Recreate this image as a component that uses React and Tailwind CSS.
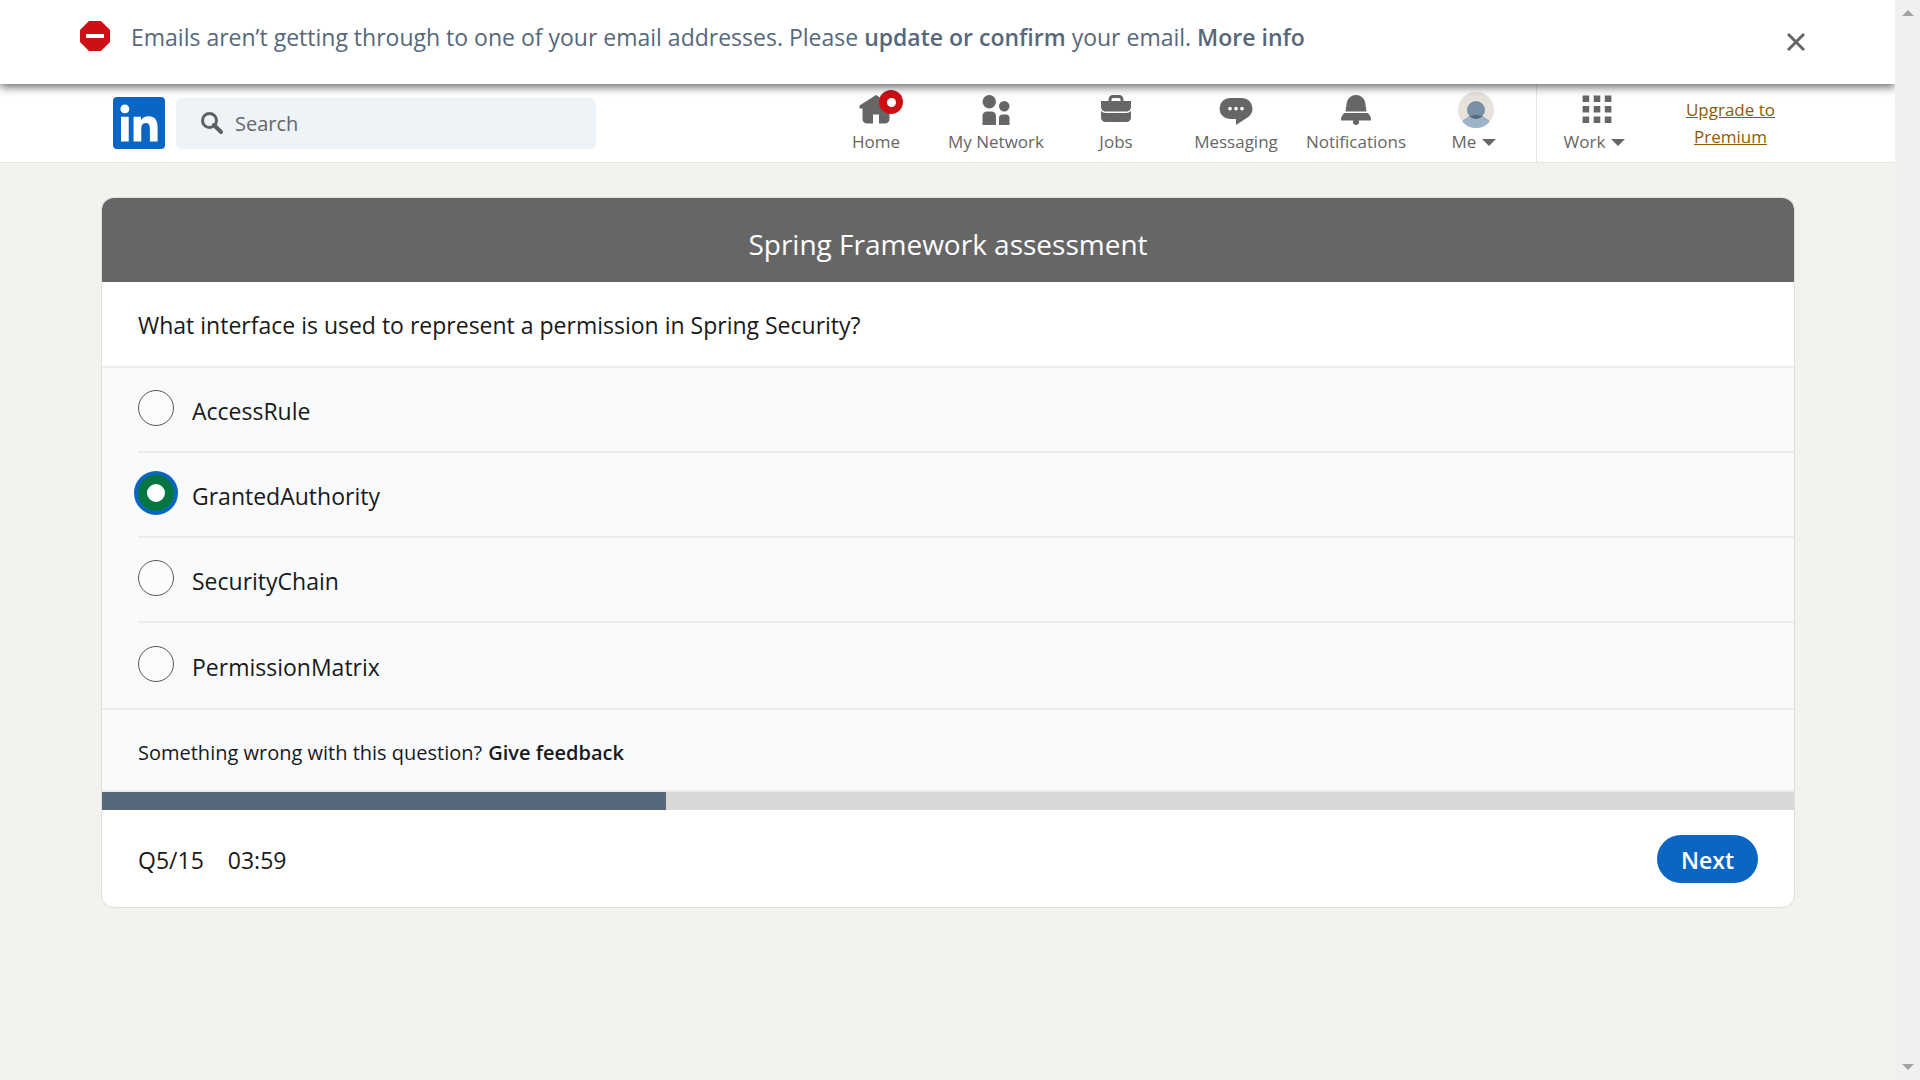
import { useState } from "react";
import { FaLinkedin } from "react-icons/fa";

const NavIcon = ({ d }) => (
  <svg viewBox="0 0 24 24" className="size-9" fill="currentColor" aria-hidden="true">
    <path d={d} />
  </svg>
);

const navItems = [
  {
    label: "Home",
    badge: true,
    d: "M23 9v2h-2v7a3 3 0 01-3 3h-4v-6h-4v6H6a3 3 0 01-3-3v-7H1V9l11-7 5 3.18V2h3v5.09z",
  },
  {
    label: "My Network",
    d: "M12 16v6H3v-6a3 3 0 013-3h3a3 3 0 013 3zm5.5-3A3.5 3.5 0 1014 9.5a3.5 3.5 0 003.5 3.5zm1 2h-2a2.5 2.5 0 00-2.5 2.5V22h7v-4.5a2.5 2.5 0 00-2.5-2.5zM7.5 2A4.5 4.5 0 1012 6.5 4.49 4.49 0 007.5 2z",
  },
  {
    label: "Jobs",
    d: "M17 6V5a3 3 0 00-3-3h-4a3 3 0 00-3 3v1H2v4a3 3 0 003 3h14a3 3 0 003-3V6zM9 5a1 1 0 011-1h4a1 1 0 011 1v1H9zm10 9a4 4 0 003-1.38V17a3 3 0 01-3 3H5a3 3 0 01-3-3v-4.38A4 4 0 005 14z",
  },
  {
    label: "Messaging",
    d: "M16 4H8a7 7 0 000 14h4v4l8.16-5.39A6.78 6.78 0 0023 11a7 7 0 00-7-7zm-8 8.25A1.25 1.25 0 119.25 11 1.25 1.25 0 018 12.25zm4 0A1.25 1.25 0 1113.25 11 1.25 1.25 0 0112 12.25zm4 0A1.25 1.25 0 1117.25 11 1.25 1.25 0 0116 12.25z",
  },
  {
    label: "Notifications",
    d: "M22 19h-8.28a2 2 0 11-3.44 0H2v-1a4.52 4.52 0 011.17-2.83l1-1.17h15.7l1 1.17A4.42 4.42 0 0122 18zM18.21 7.44A6.27 6.27 0 0012 2a6.27 6.27 0 00-6.21 5.44L5 13h14z",
  },
];

const answers = ["AccessRule", "GrantedAuthority", "SecurityChain", "PermissionMatrix"];

const Caret = () => (
  <svg viewBox="0 0 14 7" className="h-[7px] w-3.5 shrink-0" fill="currentColor" aria-hidden="true">
    <path d="M0 0h14L7 7z" />
  </svg>
);

function Banner() {
  return (
    <div className="relative z-10 flex h-[84px] items-center bg-white pl-20 pr-[83px] shadow-[0_3px_9px_rgba(0,0,0,0.6)]">
      <svg viewBox="0 0 30 30" className="mb-3 size-[30px] shrink-0" aria-hidden="true">
        <path d="M9 0h12l9 9v12l-9 9H9l-9-9V9z" fill="#cc1016" />
        <path d="M6 13h18v4H6z" fill="#fff" />
      </svg>
      <p className="mb-2.5 ml-[21px] flex-1 text-[23px] leading-9 text-[#56687a]">
        Emails aren’t getting through to one of your email addresses. Please{" "}
        <a href="#confirm" className="font-semibold">update or confirm</a> your email.{" "}
        <a href="#info" className="font-semibold">More info</a>
      </p>
      <button type="button" aria-label="Dismiss" className="flex size-8 items-center justify-center text-[#666]">
        <svg viewBox="0 0 18 18" className="size-[18px]" stroke="currentColor" strokeWidth="3" aria-hidden="true">
          <path d="M1 1l16 16M17 1L1 17" />
        </svg>
      </button>
    </div>
  );
}

function Header() {
  return (
    <header className="border-b border-[#e6e6e4] bg-white">
      <div className="flex h-[78px] items-center pl-[113px] pr-[90px]">
        <a href="#feed" aria-label="LinkedIn" className="flex h-[52px] w-[52px] items-center justify-center text-[#0a66c2]">
          <FaLinkedin className="h-[60px] w-[52px] shrink-0" />
        </a>
        <label className="ml-[11px] flex h-[51px] w-[420px] items-center gap-3 rounded-md bg-[#eef3f8] pl-[25px]">
          <svg viewBox="0 0 22 22" className="size-[22px] shrink-0" fill="none" stroke="#5e5e5e" aria-hidden="true">
            <circle cx="8.5" cy="8.5" r="7" strokeWidth="3" />
            <path d="M13 13l7 7" strokeWidth="4" strokeLinecap="round" />
          </svg>
          <input
            type="text"
            aria-label="Search"
            placeholder="Search"
            className="min-w-0 flex-1 bg-transparent pt-0.5 text-[20px] outline-none placeholder:text-[#666]"
          />
        </label>
        <nav className="ml-auto flex h-full text-[17px] leading-6 text-[#666]">
          {navItems.map((item) => (
            <a key={item.label} href={"#" + item.label} className="flex w-[120px] flex-col items-center gap-0.5 pt-2">
              <span className="relative">
                <NavIcon d={item.d} />
                {item.badge && (
                  <span className="absolute -right-[9px] -top-0.5 flex size-6 items-center justify-center rounded-full bg-[#cc1016]">
                    <span className="size-[9px] rounded-full bg-white" />
                  </span>
                )}
              </span>
              <span>{item.label}</span>
            </a>
          ))}
          <button type="button" className="flex w-[120px] flex-col items-center gap-0.5 pt-2">
            <svg viewBox="0 0 36 36" className="size-9" aria-hidden="true">
              <clipPath id="avatar"><circle cx="18" cy="18" r="18" /></clipPath>
              <clipPath id="head"><circle cx="18" cy="18" r="9" /></clipPath>
              <g clipPath="url(#avatar)">
                <path d="M0 0h36v36H0z" fill="#e7e2dc" />
                <circle cx="18" cy="18" r="9" fill="#788fa5" />
                <circle cx="18" cy="41" r="18" fill="#9db3c8" />
                <circle cx="18" cy="41" r="18" fill="#56687a" clipPath="url(#head)" />
              </g>
            </svg>
            <span className="flex items-center gap-1.5 pr-1">Me <Caret /></span>
          </button>
          <button type="button" className="flex w-[120px] flex-col items-center gap-0.5 border-l border-[#e6e6e6] pt-2">
            <NavIcon d="M2.4 2.3h4.4v4.4H2.4zM9.8 2.3h4.4v4.4H9.8zM17.2 2.3h4.4v4.4h-4.4zM2.4 9.3h4.4v4.4H2.4zM9.8 9.3h4.4v4.4H9.8zM17.2 9.3h4.4v4.4h-4.4zM2.4 16.3h4.4v4.4H2.4zM9.8 16.3h4.4v4.4H9.8zM17.2 16.3h4.4v4.4h-4.4z" />
            <span className="flex items-center gap-1.5 pr-1">Work <Caret /></span>
          </button>
          <a href="#premium" className="flex w-[149px] items-start justify-center px-6 pt-3 text-center leading-[27px] text-[#915907] underline">
            Upgrade to Premium
          </a>
        </nav>
      </div>
    </header>
  );
}

function Assessment() {
  const [selected, setSelected] = useState("GrantedAuthority");
  const current = 5;
  const total = 15;
  return (
    <section className="ml-[102px] mr-[101px] mt-[35px] overflow-hidden rounded-xl bg-white shadow-[0_0_0_1px_#dfdfda]">
      <h1 className="flex h-[84px] items-center justify-center bg-[#666] pt-2 text-[28px] text-white">
        Spring Framework assessment
      </h1>
      <fieldset>
        <legend className="flex h-[86px] w-full items-center border-b-2 border-[#eceef0] px-9 pt-0.5">
          What interface is used to represent a permission in Spring Security?
        </legend>
        <div className="bg-[#f9fafc] pl-9">
          {answers.map((answer) => (
            <label key={answer} className="flex h-[85px] items-center gap-[18px] border-b-2 border-[#eaecee] last:border-b-0">
              <input
                type="radio"
                name="answer"
                checked={selected === answer}
                onChange={() => setSelected(answer)}
                className="mb-1 size-9 shrink-0 appearance-none rounded-full border-[1px] border-[#555] bg-[#fcfcfd] checked:border-[9px] checked:border-[#057642] checked:bg-white checked:shadow-[0_0_0_4px_#0a66c2]"
              />
              <span className="pt-1">{answer}</span>
            </label>
          ))}
        </div>
      </fieldset>
      <p className="flex h-[84px] items-center gap-1.5 border-y-2 border-[#eaecee] bg-[#f9fafc] px-9 pt-1.5 text-[20px]">
        Something wrong with this question?
        <button type="button" className="font-semibold">Give feedback</button>
      </p>
      <div role="progressbar" aria-label="Progress" aria-valuenow={current} aria-valuemax={total} className="h-[18px] bg-[#d8d8d8]">
        <div className="h-full bg-[#56687a]" style={{ width: `${(current / total) * 100}%` }} />
      </div>
      <footer className="flex h-[97px] items-center px-9">
        <span className="pt-1">Q{current}/{total}</span>
        <span className="ml-6 pt-1">03:59</span>
        <button type="button" className="ml-auto h-12 rounded-full bg-[#0a66c2] px-6 pt-1 font-semibold text-white">
          Next
        </button>
      </footer>
    </section>
  );
}

function ScrollTrack() {
  return (
    <div className="sticky top-0 flex h-screen w-[25px] shrink-0 flex-col items-center justify-between bg-[#f0f0f0] py-2.5 text-[#a3a3a3]" aria-hidden="true">
      <svg viewBox="0 0 12 6" className="h-1.5 w-3" fill="currentColor"><path d="M0 6h12L6 0z" /></svg>
      <svg viewBox="0 0 12 6" className="h-1.5 w-3" fill="currentColor"><path d="M0 0h12L6 6z" /></svg>
    </div>
  );
}

export default function App() {
  return (
    <div className="flex min-h-screen bg-[#f3f2ee] font-['Open_Sans','Noto_Sans',sans-serif] text-[23px] text-[#191919]">
      <div className="min-w-0 flex-1 overflow-hidden">
        <Banner />
        <Header />
        <Assessment />
      </div>
      <ScrollTrack />
    </div>
  );
}
